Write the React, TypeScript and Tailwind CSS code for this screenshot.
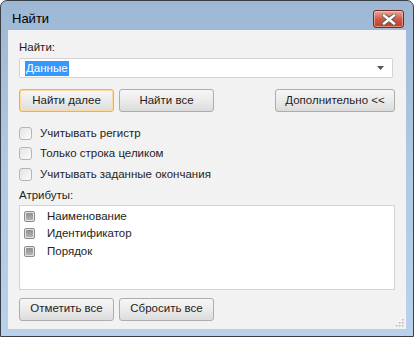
const font = { fontFamily: '"Liberation Sans", Arial, sans-serif' };

function Btn({ children, w, primary }: { children: React.ReactNode; w: string; primary?: boolean }) {
  return (
    <div
      className={`${w} h-[23px] flex items-center justify-center rounded-[3px] border text-[11.5px] text-[#1e1e1e] bg-gradient-to-b from-[#f6f6f6] via-[#ebebeb] to-[#dcdcdc] ${
        primary ? "border-[#eeb055] shadow-[inset_0_0_0_1px_#fbd9a0]" : "border-[#adadad]"
      }`}
    >
      {children}
    </div>
  );
}

function Check({ label }: { label: string }) {
  return (
    <div className="flex items-center h-[20.5px]">
      <div className="w-[13px] h-[13px] rounded-[3px] border border-[#b5b5b5] bg-gradient-to-br from-[#e4e4e4] to-[#fbfbfb]" />
      <span className="ml-[8px] text-[11.5px] text-[#1e1e1e]">{label}</span>
    </div>
  );
}

function Item({ label }: { label: string }) {
  return (
    <div className="flex items-center h-[17.5px]">
      <div className="w-[11px] h-[11px] rounded-[2px] border border-[#8c8c8c] bg-[#e2e2e2] flex items-center justify-center">
        <div className="w-[7px] h-[7px] rounded-[1px] bg-gradient-to-b from-[#8f8f8f] to-[#b4b4b4]" />
      </div>
      <span className="ml-[12px] text-[11.5px] text-[#1e1e1e]">{label}</span>
    </div>
  );
}

export default function App() {
  return (
    <div className="w-[414px] h-[337px] bg-white" style={font}>
      <div className="w-[414px] h-[337px] border border-[#3a3f45] rounded-t-[7px] bg-gradient-to-b from-[#9db7d5] via-[#b0c9e4] to-[#b9d1ea] flex flex-col">
        <div className="h-[29px] flex items-start justify-between pl-[11px] pr-[9px]">
          <span className="mt-[8px] text-[13px] text-black">Найти</span>
          <div className="mt-[9px] w-[31px] h-[18px] rounded-[3px] border border-[#6e2a22] bg-gradient-to-b from-[#e7a99c] via-[#cf5a46] to-[#c23b26] flex items-center justify-center shadow-[inset_0_0_0_1px_rgba(255,220,210,0.5)]">
            <svg width="14" height="11" viewBox="0 0 14 11">
              <path d="M2 1.5 L12 9.5 M12 1.5 L2 9.5" stroke="#5a5a5a" strokeWidth="4.2" strokeLinecap="square" />
              <path d="M2 1.5 L12 9.5 M12 1.5 L2 9.5" stroke="#ffffff" strokeWidth="2.4" strokeLinecap="square" />
            </svg>
          </div>
        </div>
        <div className="mx-[7px] h-[299px] bg-[#f2f2f2] pl-[11px] pr-[12px] pt-[9px] relative">
          <div className="text-[11.5px] text-[#1e1e1e] h-[17px] leading-[17px]">Найти:</div>
          <div className="mt-[2px] h-[20px] w-[374px] rounded-[2px] border border-[#d4d4d4] bg-white flex items-center justify-between pl-[5px] pr-[8px]">
            <span className="bg-[#3399ff] text-white text-[11.5px] leading-[15px] px-[1px]">Данные</span>
            <svg width="7" height="4" viewBox="0 0 7 4">
              <path d="M0 0 H7 L3.5 4 Z" fill="#555" />
            </svg>
          </div>
          <div className="mt-[11px] flex items-center">
            <Btn w="w-[95px]" primary>Найти далее</Btn>
            <div className="ml-[5px]">
              <Btn w="w-[95px]">Найти все</Btn>
            </div>
            <div className="ml-auto mr-[-1px]">
              <Btn w="w-[120px]">Дополнительно &lt;&lt;</Btn>
            </div>
          </div>
          <div className="mt-[11px] flex flex-col">
            <Check label="Учитывать регистр" />
            <Check label="Только строка целиком" />
            <Check label="Учитывать заданные окончания" />
          </div>
          <div className="mt-[2px] text-[11.5px] text-[#1e1e1e] h-[17px] leading-[17px]">Атрибуты:</div>
          <div className="mt-[1px] h-[85px] w-[376px] border border-[#d4d4d4] bg-white pl-[4px] pt-[2px] flex flex-col">
            <Item label="Наименование" />
            <Item label="Идентификатор" />
            <Item label="Порядок" />
          </div>
          <div className="mt-[8px] flex items-center">
            <Btn w="w-[95px]">Отметить все</Btn>
            <div className="ml-[5px]">
              <Btn w="w-[95px]">Сбросить все</Btn>
            </div>
          </div>
          <svg className="absolute right-[2px] bottom-[2px]" width="9" height="9" viewBox="0 0 9 9">
            {[
              [7, 1],
              [4, 4],
              [7, 4],
              [1, 7],
              [4, 7],
              [7, 7],
            ].map(([x, y], i) => (
              <rect key={i} x={x} y={y} width="1.5" height="1.5" fill="#b8b8b8" />
            ))}
          </svg>
        </div>
      </div>
    </div>
  );
}
